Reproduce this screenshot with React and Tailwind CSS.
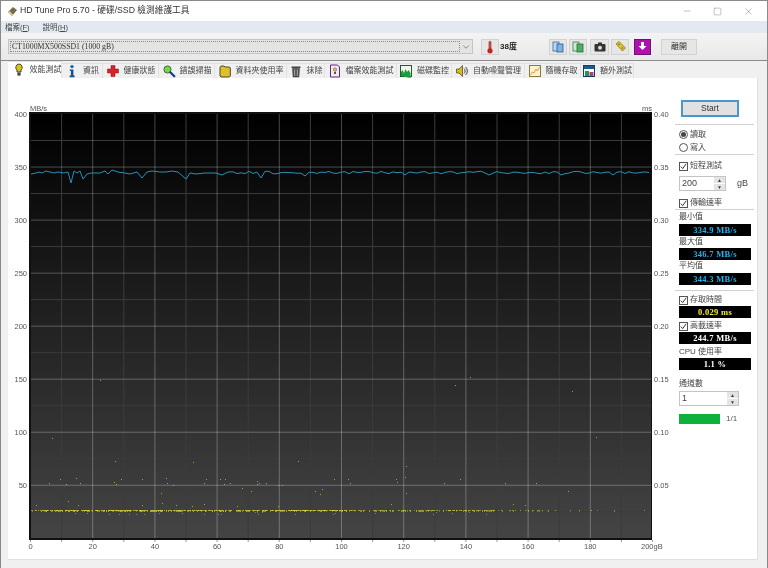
import { ChevronDown, Minus, Square, X } from "lucide-react";

const cjk = "font-['Liberation_Sans','Noto_Sans_CJK_TC',sans-serif]";

const xAt = (v) => 30.5 + v * 3.11;
const yAt = (v) => 538.3 - v * 1.0607;

// seeded random so the dots stay put between runs
function makeRandom(seed) {
  let s = seed;
  return () => {
    s = (s * 1664525 + 1013904223) % 4294967296;
    return s / 4294967296;
  };
}

const startOfLine = [
  [31, 174], [36, 173], [39, 172], [42, 173], [46, 171], [50, 172], [54, 173], [58, 172], [64, 173], [68, 172],
  [71, 183], [74, 171], [77, 173], [80, 171], [83, 179], [87, 174], [91, 173], [100, 173], [105, 171], [108, 174],
  [112, 170], [118, 172], [125, 173], [130, 174], [137, 172], [142, 178], [147, 172], [152, 171], [160, 172],
  [166, 172], [172, 171], [178, 172], [186, 179], [190, 173], [196, 174], [205, 173], [216, 173], [222, 175], [228, 172],
];
const dips = { 261: 178, 279: 176, 306: 176, 363: 179, 405: 175, 447: 175, 490: 175, 560: 175, 612: 175 };

function transferLine() {
  const rnd = makeRandom(7);
  const pts = [...startOfLine];
  for (let x = 233; x < 651; x += 4) {
    const dip = Object.keys(dips).find((d) => Math.abs(d - x) < 2);
    pts.push([x, dip ? dips[dip] : 171.2 + rnd() * 2.6]);
  }
  return pts.map((p) => p.join(",")).join(" ");
}

const looseDots = [
  [49, 483], [60, 479], [66, 484], [76, 478], [80, 483], [114, 482], [116, 484], [121, 479], [142, 479], [166, 478],
  [167, 483], [173, 485], [204, 483], [206, 479], [220, 479], [225, 479], [224, 484], [230, 483], [242, 488], [251, 491],
  [257, 481], [259, 483], [266, 483], [278, 485], [282, 485], [315, 491], [322, 489], [320, 494], [334, 479], [161, 493],
  [162, 503], [68, 501], [78, 505], [36, 505], [142, 505], [176, 505], [192, 506], [204, 504], [237, 506], [278, 506],
  [193, 462], [298, 461], [348, 479], [350, 483], [396, 479], [397, 482], [405, 477], [444, 483], [460, 479], [505, 483],
  [536, 483], [568, 491], [406, 493], [391, 504], [513, 504], [525, 505], [100, 380], [52, 438], [596, 437], [455, 385],
  [470, 377], [572, 391], [115, 461], [406, 466], [257, 484],
];

function accessDots() {
  const rnd = makeRandom(42);
  const dots = [];
  for (let x = 31; x < 645; x++) {
    const chance = x < 350 ? 0.85 : x < 495 ? 0.68 : x < 560 ? 0.34 : 0.12;
    if (rnd() > chance) continue;
    const fade = x < 350 ? 1 : x < 495 ? 0.8 : 0.65;
    dots.push([x, 510, (0.45 + rnd() * 0.45) * fade]);
    if (rnd() < 0.55) dots.push([x, 511, (0.3 + rnd() * 0.4) * fade]);
    if (x < 500 && rnd() < 0.07) dots.push([x, 512 + Math.floor(rnd() * 3), 0.4]);
  }
  return dots;
}

function Chart() {
  const minorX = Array.from({ length: 10 }, (_, i) => xAt(i * 20 + 10));
  const majorX = Array.from({ length: 11 }, (_, i) => xAt(i * 20));
  const minorY = Array.from({ length: 8 }, (_, i) => yAt(i * 50 + 25));
  const majorY = Array.from({ length: 7 }, (_, i) => yAt(i * 50 + 50));

  return (
    <svg width="667" height="460" viewBox="8 100 667 460" className="shrink-0">
      <defs>
        <linearGradient id="plotFill" x1="0" y1="0" x2="0" y2="1">
          <stop offset="0" stopColor="#000000" />
          <stop offset="1" stopColor="#444444" />
        </linearGradient>
      </defs>
      <rect x="29" y="112" width="623" height="428" fill="#111111" />
      <rect x="31" y="114" width="620" height="424" fill="url(#plotFill)" />
      {minorX.map((x) => <line key={x} x1={x} x2={x} y1="114" y2="538" stroke="#3c3c3c" />)}
      {minorY.map((y) => <line key={y} x1="31" x2="651" y1={y} y2={y} stroke="#3c3c3c" />)}
      {majorX.slice(1, 10).map((x) => <line key={x} x1={x} x2={x} y1="114" y2="538" stroke="#fff" strokeOpacity="0.27" />)}
      {majorY.map((y) => <line key={y} x1="31" x2="651" y1={y} y2={y} stroke="#fff" strokeOpacity="0.27" />)}

      {accessDots().map(([x, y, o], i) => (
        <rect key={i} x={x} y={y} width="1" height="1" fill="#f0ee30" fillOpacity={o} />
      ))}
      {looseDots.map(([x, y]) => <rect key={`${x}-${y}`} x={x} y={y} width="1" height="1" fill="#c9c83a" fillOpacity="0.75" />)}
      <polyline points={transferLine()} fill="none" stroke="#2b8fb4" strokeWidth="1" />

      {[...majorX, ...minorX].map((x) => <line key={x} x1={x} x2={x} y1="540" y2="542" stroke="#999" />)}

      <g fill="#555" fontSize="7.5" fontFamily="'Liberation Sans', sans-serif">
        <text x="30" y="111">MB/s</text>
        <text x="642" y="111">ms</text>
        {[400, 350, 300, 250, 200, 150, 100, 50].map((v) => (
          <text key={v} x="27" y={yAt(v) + 3} textAnchor="end">{v}</text>
        ))}
        {["0.40", "0.35", "0.30", "0.25", "0.20", "0.15", "0.10", "0.05"].map((t, i) => (
          <text key={t} x="654" y={yAt(400 - i * 50) + 3}>{t}</text>
        ))}
        {[0, 20, 40, 60, 80, 100, 120, 140, 160, 180].map((v) => (
          <text key={v} x={xAt(v)} y="549" textAnchor="middle">{v}</text>
        ))}
        <text x="641" y="549" textAnchor="start">200gB</text>
      </g>
    </svg>
  );
}

function Icon({ children }) {
  return <svg width="14" height="14" viewBox="0 0 14 14" className="shrink-0">{children}</svg>;
}

const tabs = [
  {
    label: "效能測試", w: "w-[54px] pl-1", icon: (
      <Icon>
        <path d="M7 1a3.4 3.4 0 0 0-2 6v2h4V7a3.4 3.4 0 0 0-2-6z" fill="#d6c420" stroke="#3d3a0a" strokeWidth=".9" />
        <rect x="5.4" y="9.6" width="3.2" height="3" fill="#444" />
      </Icon>
    ),
  },
  {
    label: "資訊", w: "w-[41px]", icon: (
      <Icon>
        <circle cx="7" cy="2.6" r="1.7" fill="#1a62b8" />
        <path d="M4.8 5.4h3.6v6.2h1.2v1.6H4.6v-1.6h1.3V7H4.8z" fill="#15508f" />
      </Icon>
    ),
  },
  {
    label: "健康狀態", w: "w-[56px]", icon: (
      <Icon>
        <path d="M5 1.5h4v3.5h3.5v4H9v3.5H5V9H1.5V5H5z" fill="#d8212a" stroke="#8f1218" strokeWidth=".5" />
      </Icon>
    ),
  },
  {
    label: "錯誤掃描", w: "w-[56px]", icon: (
      <Icon>
        <circle cx="5.5" cy="5.5" r="3.6" fill="#7fd04e" stroke="#2a7a2a" strokeWidth="1" />
        <path d="M8.3 8.3l4 4" stroke="#123c8c" strokeWidth="2.2" strokeLinecap="round" />
      </Icon>
    ),
  },
  {
    label: "資料夾使用率", w: "w-[72px]", icon: (
      <Icon>
        <path d="M2 3.5l1-1.5h3l1 1h4.5l.8 1v8l-1 1H3l-1-1z" fill="#ddc02c" stroke="#3c3a12" strokeWidth=".9" />
      </Icon>
    ),
  },
  {
    label: "抹除", w: "w-[38px]", icon: (
      <Icon>
        <path d="M2.5 2.5h9v1.5h-9z" fill="#444" />
        <path d="M3.5 4.5h7l-.6 8.5H4.1z" fill="#555" stroke="#222" strokeWidth=".5" />
        <path d="M5.6 5.5v6.5M8.4 5.5v6.5" stroke="#ccc" strokeWidth=".7" />
      </Icon>
    ),
  },
  {
    label: "檔案效能測試", w: "w-[72px]", icon: (
      <Icon>
        <path d="M2.5 1h7l2 2v10h-9z" fill="#f4e9f8" stroke="#5e2a78" strokeWidth="1" />
        <circle cx="7" cy="5.5" r="1.7" fill="#d9c83a" stroke="#555" strokeWidth=".5" />
        <rect x="6" y="7.8" width="2" height="2.2" fill="#555" />
      </Icon>
    ),
  },
  {
    label: "磁碟監控", w: "w-[55px]", icon: (
      <Icon>
        <rect x="1.5" y="1.5" width="11" height="11" fill="#eef6ee" stroke="#1e5a2c" />
        <path d="M2 12V8l1.5-2 1.5 3 1.5-4 1.5 3 1.5-2 2 3v5z" fill="#1f9c3c" />
      </Icon>
    ),
  },
  {
    label: "自動噪聲管理", w: "w-[73px]", icon: (
      <Icon>
        <path d="M1.5 5h2.5l3.5-3.5v11L4 9H1.5z" fill="#d8b62a" stroke="#4a3f10" strokeWidth=".7" />
        <path d="M9 4.5a3.4 3.4 0 0 1 0 5M10.6 3a5.4 5.4 0 0 1 0 8" fill="none" stroke="#333" strokeWidth=".9" />
      </Icon>
    ),
  },
  {
    label: "隨機存取", w: "w-[56px]", icon: (
      <Icon>
        <rect x="1.5" y="1.5" width="11" height="11" fill="#fbf2cf" stroke="#8b7a3c" />
        <path d="M2.5 11l2-3 1.5 1 2-4 1.5 2 2-4" fill="none" stroke="#d88c2a" strokeWidth=".8" />
      </Icon>
    ),
  },
  {
    label: "額外測試", w: "w-[53px]", icon: (
      <Icon>
        <rect x="1.5" y="1.5" width="11" height="11" fill="#fff" stroke="#1d3a5c" />
        <rect x="2" y="2" width="10" height="3" fill="#1d5c8c" />
        <rect x="3" y="7" width="4" height="5" fill="#1f9c3c" />
        <rect x="7.5" y="8" width="4" height="4" fill="#b43a8c" />
      </Icon>
    ),
  },
];

function Tabs() {
  return (
    <div className="flex h-[17px] shrink-0 pl-[7px] items-end">
      {tabs.map((tab, i) => (
        <div
          key={tab.label}
          className={`${tab.w} flex items-center justify-center gap-1 border-t border-r border-[#e2e2e2] text-[8px] text-[#444] ${i === 0 ? "h-[17px] bg-white" : "h-[15px] bg-[#f0f0f0]"}`}
        >
          {tab.icon}
          <span className="whitespace-nowrap">{tab.label}</span>
        </div>
      ))}
    </div>
  );
}

function ToolButton({ className = "w-[18px]", children }) {
  return (
    <div className={`${className} h-4 flex items-center justify-center bg-[#e6e6e6] border border-[#d2d2d2] shrink-0`}>
      {children}
    </div>
  );
}

function Check({ label }) {
  return (
    <div className="flex items-center gap-[2px] h-3 pl-1 text-[8px] text-[#444]">
      <div className="w-[9px] h-[9px] border border-[#555] bg-white flex items-center justify-center">
        <svg width="7" height="7" viewBox="0 0 7 7">
          <path d="M.8 3.6l1.9 2 3.5-4.8" fill="none" stroke="#333" strokeWidth="1" />
        </svg>
      </div>
      {label}
    </div>
  );
}

function Radio({ label, on }) {
  return (
    <div className="flex items-center gap-[2px] h-[13px] pl-1 text-[8px] text-[#444]">
      <div className="w-[9px] h-[9px] rounded-full border border-[#555] bg-white flex items-center justify-center">
        {on && <div className="w-[5px] h-[5px] rounded-full bg-[#444]" />}
      </div>
      {label}
    </div>
  );
}

function Readout({ value, color }) {
  return (
    <div className={`h-3 ml-1 w-[72px] bg-black flex items-center justify-center font-['Liberation_Serif',serif] font-bold text-[8.5px] tracking-[.3px] ${color}`}>
      {value}
    </div>
  );
}

function Label({ children }) {
  return <div className="h-3 pl-1 flex items-center text-[8px] text-[#444]">{children}</div>;
}

function Spinner({ value, w }) {
  return (
    <div className={`${w} h-[15px] ml-1 flex border border-[#c4c4c4] bg-white text-[9px] text-[#444]`}>
      <div className="flex-1 pl-[2px] flex items-center font-['Liberation_Sans',sans-serif]">{value}</div>
      <div className="w-[11px] flex flex-col gap-px bg-white">
        <div className="flex-1 bg-[#e4e4e4] flex items-center justify-center text-[5px] leading-none">▲</div>
        <div className="flex-1 bg-[#e4e4e4] flex items-center justify-center text-[5px] leading-none">▼</div>
      </div>
    </div>
  );
}

function Rule() {
  return <div className="h-px bg-[#d0d0d0]" />;
}

function SidePanel() {
  return (
    <div className="w-[79px] shrink-0 flex flex-col pt-[22px]">
      <div className="ml-[6px] w-[58px] h-[17px] border-2 border-[#4a97d0] bg-[#e1e1e1] flex items-center justify-center text-[8.5px] text-[#333]">
        Start
      </div>
      <div className="mt-[7px]"><Rule /></div>
      <div className="mt-[3px]"><Radio label="讀取" on /></div>
      <Radio label="寫入" />
      <Rule />
      <div className="mt-[5px]"><Check label="短程測試" /></div>
      <div className="mt-1 flex items-center">
        <Spinner value="200" w="w-[47px]" />
        <span className="ml-[11px] text-[9px] text-[#444]">gB</span>
      </div>
      <div className="mt-[6px]"><Check label="傳輸速率" /></div>
      <Rule />
      <div className="mt-px"><Label>最小值</Label></div>
      <div className="mt-px"><Readout value="334.9 MB/s" color="text-[#1eb4f0]" /></div>
      <Label>最大值</Label>
      <Readout value="346.7 MB/s" color="text-[#1eb4f0]" />
      <Label>平均值</Label>
      <div className="mt-px"><Readout value="344.3 MB/s" color="text-[#1eb4f0]" /></div>
      <div className="mt-[5px]"><Rule /></div>
      <div className="mt-[3px]"><Check label="存取時間" /></div>
      <Readout value="0.029 ms" color="text-[#f0ee30]" />
      <div className="mt-[2px]"><Check label="高載速率" /></div>
      <Readout value="244.7 MB/s" color="text-white" />
      <div className="mt-[2px]"><Label>CPU 使用率</Label></div>
      <Readout value="1.1 %" color="text-white" />
      <div className="mt-2"><Label>通道數</Label></div>
      <div className="mt-px"><Spinner value="1" w="w-[60px]" /></div>
      <div className="mt-[7px] flex items-center">
        <div className="ml-1 w-[41px] h-[10px] bg-[#0fb03c]" />
        <span className="ml-[6px] text-[8px] text-[#555] font-['Liberation_Sans',sans-serif]">1/1</span>
      </div>
    </div>
  );
}

export default function App() {
  return (
    <div className={`${cjk} w-[768px] h-[568px] flex flex-col overflow-hidden bg-[#f0f0f0] border-t border-x border-[#8a8a8a] blur-[0.35px]`}>
      {/* Title bar */}
      <div className="h-5 shrink-0 bg-white flex items-center pl-[6px] text-[8.7px] text-[#333]">
        <svg width="11" height="11" viewBox="0 0 11 11" className="mr-[2px]">
          <path d="M1 6l5-5 4 3-5 6z" fill="#7a6a4a" />
          <path d="M1 6l4 4 1-1.5L2.5 5z" fill="#d9cfa8" />
        </svg>
        HD Tune Pro 5.70 - 硬碟/SSD 檢測維護工具
        <div className="ml-auto flex items-center text-[#666]">
          <div className="w-[31px] flex justify-center"><Minus size={10} strokeWidth={1} /></div>
          <div className="w-[31px] flex justify-center"><Square size={9} strokeWidth={1} /></div>
          <div className="w-[31px] flex justify-center mr-[3px]"><X size={11} strokeWidth={1} /></div>
        </div>
      </div>

      {/* Menu */}
      <div className="h-3 shrink-0 bg-[#e3e9f1] flex items-center gap-[13px] pl-[4px] pt-px text-[7.5px] text-[#444]">
        <span>檔案(<span className="underline">F</span>)</span>
        <span>說明(<span className="underline">H</span>)</span>
      </div>

      {/* Toolbar */}
      <div className="h-[28px] shrink-0 flex items-center pl-[7px] bg-gradient-to-b from-[#f4f4f4] to-[#e8e8e8] border-b border-[#8c8c8c]">
        <div className="w-[465px] h-[15px] flex items-center border border-[#c4c4c4] bg-[#e4e4e4] shrink-0">
          <div className="flex-1 h-[11px] ml-px flex items-center border border-dotted border-[#888] pl-px font-['Liberation_Serif',serif] text-[7.8px] text-[#333]">
            CT1000MX500SSD1 (1000 gB)
          </div>
          <ChevronDown size={10} className="mx-px text-[#777]" />
        </div>
        <div className="ml-2"><ToolButton>
          <svg width="8" height="14" viewBox="0 0 8 14">
            <rect x="2.8" y="1" width="2.4" height="9" rx="1.2" fill="#d33" stroke="#888" strokeWidth=".5" />
            <circle cx="4" cy="10.8" r="2.6" fill="#c92020" />
          </svg>
        </ToolButton></div>
        <span className="ml-[1px] w-[49px] text-[8px] font-bold text-[#222] whitespace-nowrap">38度</span>
        <div className="flex items-center gap-[2px]">
          <ToolButton>
            <svg width="12" height="12" viewBox="0 0 12 12">
              <rect x="1" y="1" width="6" height="9" fill="#bcd8f0" stroke="#2a6aa8" strokeWidth=".8" />
              <rect x="5" y="3" width="6" height="8" fill="#7fb2e0" stroke="#2a5a90" strokeWidth=".8" />
            </svg>
          </ToolButton>
          <ToolButton>
            <svg width="12" height="12" viewBox="0 0 12 12">
              <rect x="1" y="1" width="6" height="9" fill="#cfe8cf" stroke="#3a7a4a" strokeWidth=".8" />
              <rect x="5" y="3" width="6" height="8" fill="#4db060" stroke="#2a6a3a" strokeWidth=".8" />
            </svg>
          </ToolButton>
          <ToolButton className="w-[19px] ml-px">
            <svg width="12" height="10" viewBox="0 0 12 10">
              <rect x=".5" y="2" width="11" height="7.5" rx="1" fill="#333" />
              <rect x="4" y=".5" width="4" height="2" fill="#333" />
              <circle cx="6" cy="5.7" r="2" fill="#ddd" />
            </svg>
          </ToolButton>
          <ToolButton>
            <svg width="13" height="13" viewBox="0 0 13 13">
              <path d="M2 4l3-2.5 6.5 6.5-3 3z" fill="#d9c22c" stroke="#7a6d12" strokeWidth=".7" />
              <circle cx="5" cy="4.5" r=".8" fill="#7a6d12" />
              <circle cx="8.5" cy="8" r=".8" fill="#7a6d12" />
            </svg>
          </ToolButton>
          <div className="ml-[3px]"><ToolButton className="w-[17px] !bg-[#b010b0] !border-[#701070]">
            <svg width="11" height="11" viewBox="0 0 11 11">
              <path d="M4 1h3v4h2.5l-4 4-4-4H4z" fill="#fff" />
            </svg>
          </ToolButton></div>
          <div className="ml-[8px]"><ToolButton className="w-[36px]">
            <span className="text-[8px] text-[#333]">離開</span>
          </ToolButton></div>
        </div>
      </div>

      <Tabs />

      {/* Benchmark page */}
      <div className="ml-[7px] w-[750px] h-[482px] shrink-0 flex bg-white border-r border-b border-[#e0e0e0]">
        <div className="mt-[22px]"><Chart /></div>
        <SidePanel />
      </div>
    </div>
  );
}
